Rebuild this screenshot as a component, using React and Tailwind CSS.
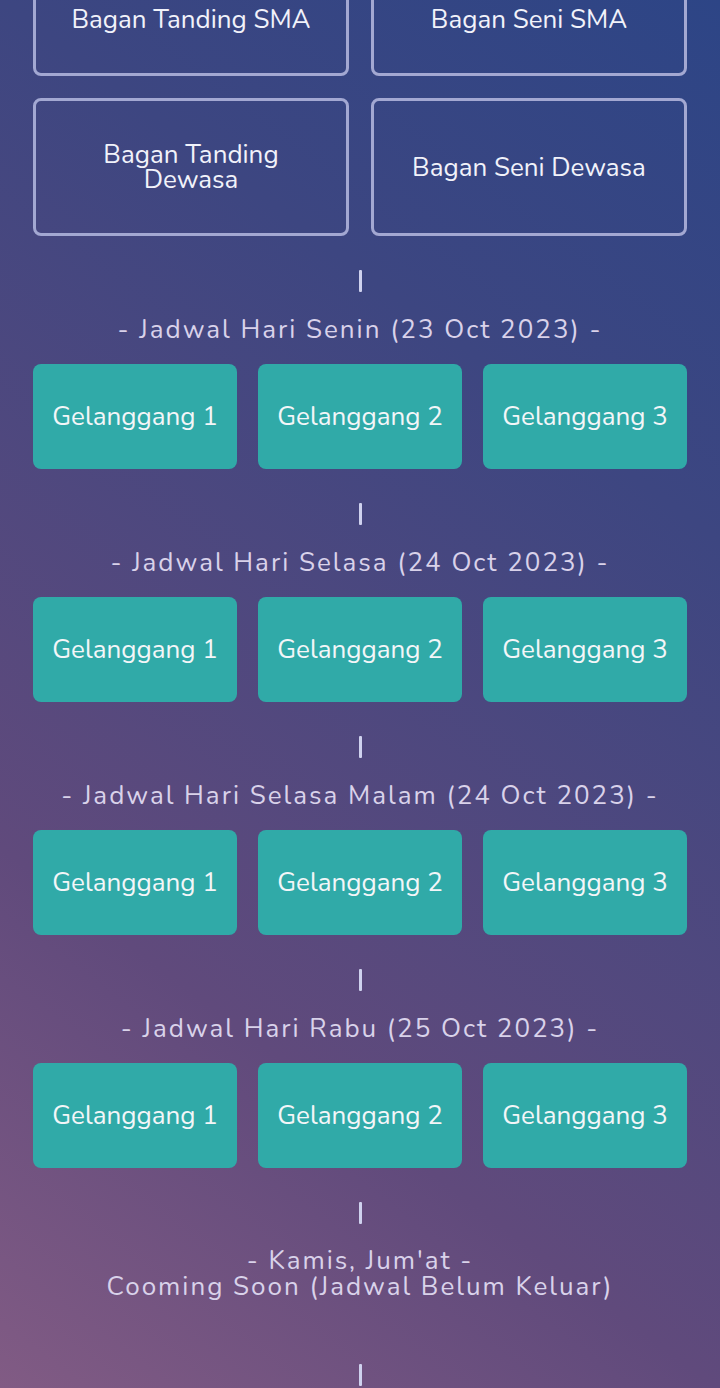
import React from "react";

const font = { fontFamily: "Nunito, Lato, 'Noto Sans', sans-serif" };

function Bar() {
  return <div className="mx-auto w-[3px] h-[22px] bg-[#cfd2ee] rounded-[1px]" />;
}

function Gelanggang() {
  return (
    <div className="grid grid-cols-3 gap-[21px]">
      {[1, 2, 3].map((n) => (
        <div
          key={n}
          className="h-[105px] rounded-[8px] bg-[#30aaa8] flex items-center justify-center text-[26px] leading-[28px] text-[#f3f6f8]"
        >
          Gelanggang {n}
        </div>
      ))}
    </div>
  );
}

function Section({ title }) {
  return (
    <div className="flex flex-col">
      <div className="mt-[34px]">
        <Bar />
      </div>
      <div className="mt-[24px] text-center text-[26px] leading-[28px] tracking-[2px] text-[#d9d2ea]">
        {title}
      </div>
      <div className="mt-[20px]">
        <Gelanggang />
      </div>
    </div>
  );
}

function OutlineBtn({ children, h }) {
  return (
    <div
      className={`${h} rounded-[8px] border-[3px] border-[#a3a8d2] flex items-center justify-center text-center text-[26px] leading-[25px] text-[#f1f2fa]`}
    >
      {children}
    </div>
  );
}

export default function App() {
  return (
    <div
      className="w-[720px] h-[1388px] overflow-hidden bg-[linear-gradient(37deg,#815b84_0%,#604a7c_28%,#3d4681_72%,#2d4586_100%)]"
      style={font}
    >
      <div className="px-[33px] mt-[-37px] flex flex-col">
        <div className="grid grid-cols-2 gap-x-[22px] gap-y-[22px]">
          <OutlineBtn h="h-[113px]">Bagan Tanding SMA</OutlineBtn>
          <OutlineBtn h="h-[113px]">Bagan Seni SMA</OutlineBtn>
          <OutlineBtn h="h-[138px]">
            Bagan Tanding
            <br />
            Dewasa
          </OutlineBtn>
          <OutlineBtn h="h-[138px]">Bagan Seni Dewasa</OutlineBtn>
        </div>
        <Section title="- Jadwal Hari Senin (23 Oct 2023) -" />
        <Section title="- Jadwal Hari Selasa (24 Oct 2023) -" />
        <Section title="- Jadwal Hari Selasa Malam (24 Oct 2023) -" />
        <Section title="- Jadwal Hari Rabu (25 Oct 2023) -" />
        <div className="mt-[34px]">
          <Bar />
        </div>
        <div className="mt-[24px] text-center text-[26px] leading-[26px] tracking-[2px] text-[#d9d2ea]">
          - Kamis, Jum'at -
          <br />
          Cooming Soon (Jadwal Belum Keluar)
        </div>
        <div className="mt-[64px]">
          <Bar />
        </div>
      </div>
    </div>
  );
}
